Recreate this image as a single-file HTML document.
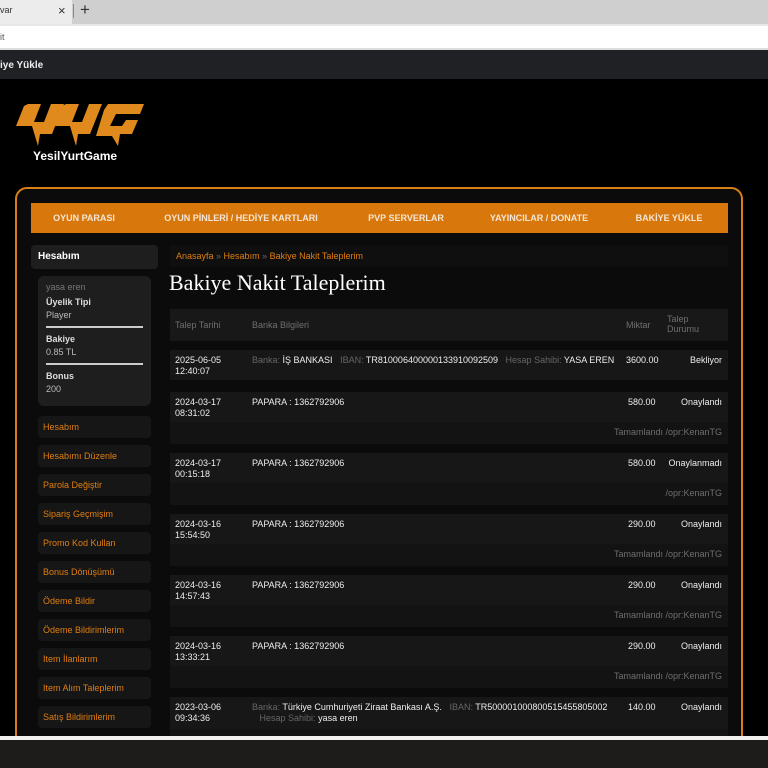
<!DOCTYPE html>
<html><head><meta charset="utf-8"><style>
*{margin:0;padding:0;box-sizing:border-box}
html,body{width:768px;height:768px;overflow:hidden}
body{background:#000;font-family:"Liberation Sans",sans-serif;position:relative}
.a{position:absolute}
.nav span{position:absolute;top:0;line-height:30px;color:#f3e6d6;font-size:9px;font-weight:bold;transform:translateX(-50%);white-space:nowrap}
.side{left:38px;width:113px;height:22px;background:#161616;border-radius:4px;color:#e07e10;font-size:9px;line-height:22px;padding-left:5px}
.row{left:170px;width:558px;background:#171717}
.row div{position:absolute;font-size:9px;color:#eee}
.sub{left:170px;width:558px;height:22px;background:#131313;color:#6e6e6e;font-size:9px;text-align:right;padding-right:6px;line-height:20px}
.g{color:#666}
</style></head><body>
<div class="a" style="left:0;top:0;width:768px;height:24px;background:#cfcfcf"></div>
<div class="a" style="left:0;top:0;width:72px;height:24px;background:#ececec"></div>
<div class="a" style="left:0;top:5px;font-size:9px;color:#333">var</div>
<div class="a" style="left:58px;top:3px;font-size:13px;color:#333">×</div>
<div class="a" style="left:73px;top:4px;width:1px;height:14px;background:#888"></div>
<div class="a" style="left:80px;top:0px;font-size:17px;color:#333">+</div>
<div class="a" style="left:0;top:24px;width:768px;height:26px;background:#fff;border-top:2px solid #e8e8e8;border-bottom:2px solid #ddd"></div>
<div class="a" style="left:0;top:32px;font-size:9px;color:#555">it</div>
<div class="a" style="left:0;top:50px;width:768px;height:29px;background:#202124"></div>
<div class="a" style="left:0;top:60px;font-size:10px;color:#eee;font-weight:bold">iye Yükle</div>

<svg class="a" style="left:16px;top:102px" width="130" height="46" viewBox="0 0 130 46">
<g fill="#e08a1e">
<polygon points="12,2 25,2 18,20 28,20 35,2 48,2 36,32 24,32 22,44 16,24 0,24 8,4"/>
<polygon points="50,2 63,2 56,20 66,20 73,2 86,2 74,32 62,32 60,44 54,24 38,24 46,4"/>
<polygon points="92,2 128,2 124,12 100,12 94,24 106,24 110,18 122,18 116,32 104,32 102,44 96,34 80,34 88,8"/>
</g></svg>
<div class="a" style="left:33px;top:149px;font-size:12px;font-weight:bold;color:#fff">YesilYurtGame</div>

<div class="a" style="left:15px;top:187px;width:728px;height:570px;border:2px solid #d97f18;border-radius:12px;background:#0b0b0b"></div>
<div class="a nav" style="left:31px;top:203px;width:697px;height:30px;background:#d8770b">
<span style="left:53px">OYUN PARASI</span>
<span style="left:210px">OYUN PİNLERİ / HEDİYE KARTLARI</span>
<span style="left:375px">PVP SERVERLAR</span>
<span style="left:508px">YAYINCILAR / DONATE</span>
<span style="left:638px">BAKİYE YÜKLE</span>
</div>

<div class="a" style="left:31px;top:245px;width:127px;height:24px;background:#1e1e1e;border-radius:4px;color:#fff;font-size:10px;font-weight:bold;line-height:24px;padding-left:7px">Hesabım</div>
<div class="a" style="left:38px;top:276px;width:113px;height:130px;background:#1e1e1e;border-radius:6px;font-size:9px;color:#ddd;padding:6px 8px">
<div style="color:#777">yasa eren</div>
<div style="margin-top:5px;font-weight:bold">Üyelik Tipi</div><div style="color:#bbb;margin-top:3px">Player</div>
<div style="border-top:2px solid #ccc;margin:6px 0 6px"></div>
<div style="font-weight:bold">Bakiye</div><div style="color:#bbb;margin-top:3px">0.85 TL</div>
<div style="border-top:2px solid #ccc;margin:6px 0 6px"></div>
<div style="font-weight:bold">Bonus</div><div style="color:#bbb;margin-top:3px">200</div>
</div>
<div class="a side" style="top:416px">Hesabım</div>
<div class="a side" style="top:445px">Hesabımı Düzenle</div>
<div class="a side" style="top:474px">Parola Değiştir</div>
<div class="a side" style="top:503px">Sipariş Geçmişim</div>
<div class="a side" style="top:532px">Promo Kod Kullan</div>
<div class="a side" style="top:561px">Bonus Dönüşümü</div>
<div class="a side" style="top:590px">Ödeme Bildir</div>
<div class="a side" style="top:619px">Ödeme Bildirimlerim</div>
<div class="a side" style="top:648px">Item İlanlarım</div>
<div class="a side" style="top:677px">Item Alım Taleplerim</div>
<div class="a side" style="top:706px">Satış Bildirimlerim</div>

<div class="a" style="left:170px;top:245px;width:558px;height:22px;background:#0f0f0f;font-size:9px;color:#e07e10;line-height:22px;padding-left:6px">Anasayfa <span class="g">»</span> Hesabım <span class="g">»</span> Bakiye Nakit Taleplerim</div>
<div class="a" style="left:169px;top:270px;font-family:'Liberation Serif',serif;font-size:22px;color:#fff">Bakiye Nakit Taleplerim</div>

<div class="a row" style="top:309px;height:32px;background:#181818">
<div style="left:5px;top:11px;color:#6f6f6f">Talep Tarihi</div>
<div style="left:82px;top:11px;color:#6f6f6f">Banka Bilgileri</div>
<div style="left:456px;top:11px;color:#6f6f6f">Miktar</div>
<div style="left:497px;top:5px;color:#6f6f6f;line-height:10px">Talep<br>Durumu</div>
</div>

<div class="a row" style="top:350px;height:30px">
<div style="left:5px;top:5px;line-height:11px">2025-06-05<br>12:40:07</div>
<div style="left:82px;top:5px"><span class="g">Banka:</span> İŞ BANKASI &nbsp; <span class="g">IBAN:</span> TR810006400000133910092509 &nbsp; <span class="g">Hesap Sahibi:</span> YASA EREN</div>
<div style="left:456px;top:5px">3600.00</div>
<div style="right:6px;top:5px">Bekliyor</div>
</div>

<div class="a row" style="top:392px;height:30px"><div style="left:5px;top:5px;line-height:11px">2024-03-17<br>08:31:02</div><div style="left:82px;top:5px">PAPARA : 1362792906</div><div style="left:458px;top:5px">580.00</div><div style="right:6px;top:5px">Onaylandı</div></div>
<div class="a sub" style="top:422px">Tamamlandı /opr:KenanTG</div>

<div class="a row" style="top:453px;height:30px"><div style="left:5px;top:5px;line-height:11px">2024-03-17<br>00:15:18</div><div style="left:82px;top:5px">PAPARA : 1362792906</div><div style="left:458px;top:5px">580.00</div><div style="right:6px;top:5px">Onaylanmadı</div></div>
<div class="a sub" style="top:483px">/opr:KenanTG</div>

<div class="a row" style="top:514px;height:30px"><div style="left:5px;top:5px;line-height:11px">2024-03-16<br>15:54:50</div><div style="left:82px;top:5px">PAPARA : 1362792906</div><div style="left:458px;top:5px">290.00</div><div style="right:6px;top:5px">Onaylandı</div></div>
<div class="a sub" style="top:544px">Tamamlandı /opr:KenanTG</div>

<div class="a row" style="top:575px;height:30px"><div style="left:5px;top:5px;line-height:11px">2024-03-16<br>14:57:43</div><div style="left:82px;top:5px">PAPARA : 1362792906</div><div style="left:458px;top:5px">290.00</div><div style="right:6px;top:5px">Onaylandı</div></div>
<div class="a sub" style="top:605px">Tamamlandı /opr:KenanTG</div>

<div class="a row" style="top:636px;height:30px"><div style="left:5px;top:5px;line-height:11px">2024-03-16<br>13:33:21</div><div style="left:82px;top:5px">PAPARA : 1362792906</div><div style="left:458px;top:5px">290.00</div><div style="right:6px;top:5px">Onaylandı</div></div>
<div class="a sub" style="top:666px">Tamamlandı /opr:KenanTG</div>

<div class="a row" style="top:697px;height:32px"><div style="left:5px;top:5px;line-height:11px">2023-03-06<br>09:34:36</div><div style="left:82px;top:5px;line-height:11px"><span class="g">Banka:</span> Türkiye Cumhuriyeti Ziraat Bankası A.Ş. &nbsp; <span class="g">IBAN:</span> TR500001000800515455805002<br>&nbsp;&nbsp;&nbsp;<span class="g">Hesap Sahibi:</span> yasa eren</div><div style="left:458px;top:5px">140.00</div><div style="right:6px;top:5px">Onaylandı</div></div>
<div class="a sub" style="top:729px"></div>

<div class="a" style="left:0;top:736px;width:768px;height:4px;background:#f0f0f0"></div>
<div class="a" style="left:0;top:740px;width:768px;height:28px;background:#1d1c1a"></div>
</body></html>
